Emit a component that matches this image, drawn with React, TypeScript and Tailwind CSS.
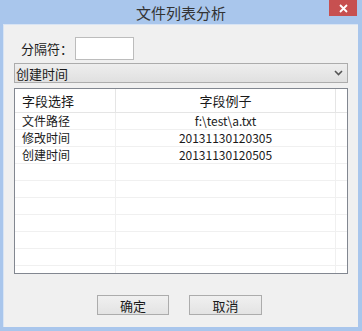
const font = { fontFamily: '"Noto Sans CJK SC", "Liberation Sans", sans-serif' };

const rows = [
  { name: '文件路径', value: 'f:\\test\\a.txt' },
  { name: '修改时间', value: '20131130120305' },
  { name: '创建时间', value: '20131130120505' },
];

export default function App() {
  const blanks = Array.from({ length: 7 });
  return (
    <div
      className="w-[362px] h-[331px] bg-[#a9c6ec] flex flex-col text-[#1a1a1a]"
      style={font}
    >
      {/* 标题栏 */}
      <div className="relative h-[24px] flex items-center justify-center">
        <span className="text-[15px] text-[#333] leading-none">文件列表分析</span>
        <div className="absolute top-0 right-[5px] w-[28px] h-[16px] bg-[#c75050] flex items-center justify-center">
          <svg width="9" height="9" viewBox="0 0 9 9">
            <path d="M1 1L8 8M8 1L1 8" stroke="white" strokeWidth="1.8" />
          </svg>
        </div>
      </div>

      {/* 内容 */}
      <div className="flex-1 ml-[3px] mr-[4px] mb-[4px] bg-[#f0f0f0] border-t border-l border-[#d8e4f4] px-[10px] flex flex-col">
        <div className="flex items-center mt-[12px] h-[23px]">
          <span className="ml-[7px] w-[54px] text-[13px]">分隔符：</span>
          <div className="w-[59px] h-[23px] bg-white border border-[#bcbcbc]" />
        </div>

        <div className="mt-[3px] h-[20px] border border-[#acacac] bg-gradient-to-b from-[#eeeeee] to-[#e0e0e0] flex items-center justify-between pl-[1px] pr-[4px]">
          <span className="text-[13px] leading-none">创建时间</span>
          <svg width="9" height="6" viewBox="0 0 9 6">
            <path d="M1 1L4.5 4.5L8 1" stroke="#555" strokeWidth="1.6" fill="none" />
          </svg>
        </div>

        {/* 列表 */}
        <div className="mt-[5px] h-[186px] border border-[#828790] bg-white overflow-hidden">
          <div className="grid grid-cols-[101px_220px_1fr] h-[24px] border-b border-[#e5e5e5] text-[13px]">
            <div className="flex items-center pl-[7px] border-r border-[#e5e5e5]">字段选择</div>
            <div className="flex items-center justify-center border-r border-[#e5e5e5]">字段例子</div>
            <div />
          </div>
          {rows.map((r) => (
            <div key={r.name} className="grid grid-cols-[101px_220px_1fr] h-[17px] border-b border-[#f0f0f0] text-[12px] leading-[16px]">
              <div className="flex items-center pl-[7px] border-r border-[#f0f0f0]">{r.name}</div>
              <div className="flex items-center justify-center border-r border-[#f0f0f0]">{r.value}</div>
              <div />
            </div>
          ))}
          {blanks.map((_, i) => (
            <div key={i} className="grid grid-cols-[101px_220px_1fr] h-[17px] border-b border-[#f0f0f0]">
              <div className="border-r border-[#f0f0f0]" />
              <div className="border-r border-[#f0f0f0]" />
              <div />
            </div>
          ))}
        </div>

        {/* 按钮 */}
        <div className="mt-[21px] flex gap-[20px] pl-[83px]">
          <button className="w-[72px] h-[20px] border border-[#acacac] bg-gradient-to-b from-[#f0f0f0] to-[#e3e3e3] text-[13px] leading-none">确定</button>
          <button className="w-[73px] h-[20px] border border-[#acacac] bg-gradient-to-b from-[#f0f0f0] to-[#e3e3e3] text-[13px] leading-none">取消</button>
        </div>
      </div>
    </div>
  );
}
